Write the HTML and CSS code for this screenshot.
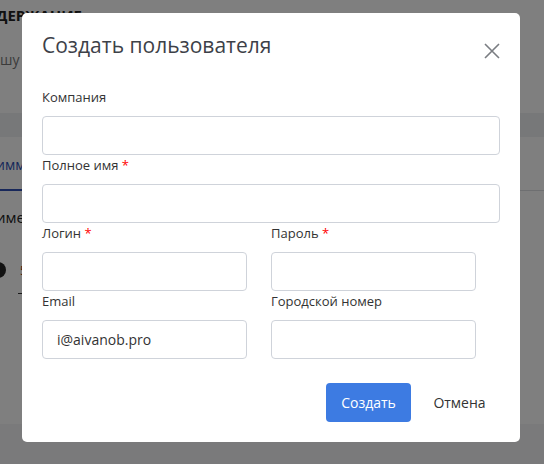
FILE: index.html
```html
<!DOCTYPE html>
<html lang="ru">
<head>
<meta charset="utf-8">
<title>Создать пользователя</title>
<link rel="stylesheet" href="styles.css">
</head>
<body>
<div class="page">
  <div class="bg-title">ДЕРЖАНИЕ</div>
  <div class="bg-sub">шу сохранить изменения</div>
  <div class="bg-band"></div>
  <div class="bg-tabs"><span class="bg-tab">имме</span></div>
  <div class="bg-name">име</div>
  <div class="bg-row"><span class="bg-avatar"></span><span class="bg-small">5</span></div>
  <div class="bg-line"></div>
  <div class="bg-footer"></div>
</div>
<div class="overlay"></div>
<div class="modal" role="dialog">
  <div class="modal-header">
    <h2 class="modal-title">Создать пользователя</h2>
    <button class="close" aria-label="Закрыть">
      <svg width="16" height="16" viewBox="0 0 16 16"><path d="M1 1 L15 15 M15 1 L1 15" stroke="#7a7d82" stroke-width="1.6" fill="none"/></svg>
    </button>
  </div>
  <form class="modal-body">
    <div class="field">
      <label class="label">Компания</label>
      <input class="input" type="text">
    </div>
    <div class="field">
      <label class="label">Полное имя <span class="req">*</span></label>
      <input class="input" type="text">
    </div>
    <div class="grid">
      <div class="field">
        <label class="label">Логин <span class="req">*</span></label>
        <input class="input" type="text">
      </div>
      <div class="field">
        <label class="label">Пароль <span class="req">*</span></label>
        <input class="input" type="password">
      </div>
      <div class="field">
        <label class="label">Email</label>
        <input class="input" type="text" value="i@aivanob.pro">
      </div>
      <div class="field">
        <label class="label">Городской номер</label>
        <input class="input" type="text">
      </div>
    </div>
    <div class="modal-footer">
      <button type="button" class="btn btn-primary">Создать</button>
      <button type="button" class="btn btn-link">Отмена</button>
    </div>
  </form>
</div>
</body>
</html>
```
FILE: styles.css
```css
* { box-sizing: border-box; }
html, body { margin: 0; padding: 0; }
body {
  width: 544px;
  height: 464px;
  overflow: hidden;
  background: #fff;
  font-family: "Open Sans", "Noto Sans", sans-serif;
  color: #333;
}
.page { height: 464px; display: flex; flex-direction: column; overflow: hidden; }
.bg-title { margin-top: 7px; margin-left: -4px; font-size: 15px; font-weight: 700; line-height: 17px; color: #222; white-space: nowrap; }
.bg-sub { margin-top: 26px; font-size: 14px; line-height: 20px; color: #777; white-space: nowrap; }
.bg-band { margin-top: 43px; height: 24px; flex: none; background: #eef0f2; }
.bg-tabs { margin-top: 18px; height: 36px; flex: none; border-bottom: 1px solid #dcdfe3; font-size: 14px; line-height: 20px; }
.bg-tab { display: inline-block; height: 36px; margin-left: -4px; padding-right: 4px; color: #2f4fb5; border-bottom: 2px solid #2f4fb5; }
.bg-name { margin-top: 16px; margin-left: -4px; font-size: 15px; line-height: 20px; color: #222; }
.bg-row { margin-top: 34px; height: 18px; flex: none; display: flex; align-items: center; gap: 14px; }
.bg-avatar { width: 16px; height: 16px; margin-left: -10px; border-radius: 50%; background: #222; }
.bg-small { font-size: 12px; color: #8a3a10; }
.bg-line { margin-top: 14px; margin-left: 18px; width: 10px; height: 1px; flex: none; background: #333; }
.bg-footer { margin-top: auto; height: 40px; flex: none; background: #f4f4f6; }

.overlay { position: fixed; inset: 0; background: rgba(0, 0, 0, 0.5); }

.modal {
  position: fixed;
  top: 13px;
  left: 22px;
  width: 498px;
  background: #fff;
  border-radius: 5px;
  padding: 17px 20px 20px;
}
.modal-header { display: flex; justify-content: space-between; align-items: flex-start; }
.modal-title { margin: 0; font-size: 21px; line-height: 30px; font-weight: 400; color: #3d4148; }
.close { margin: 13px 0 0; padding: 0; border: 0; background: none; width: 16px; height: 16px; display: block; cursor: pointer; }
.close svg { display: block; }
.modal-body { margin: 27px 0 0; }
.field { display: flex; flex-direction: column; }
.label { font-size: 13px; line-height: 20px; margin-bottom: 9px; color: #333; }
.req { color: #f00; }
.input {
  height: 39px;
  border: 1px solid #cfd3da;
  border-radius: 4px;
  padding: 0 14px;
  font: inherit;
  font-size: 14px;
  color: #333;
  background: #fff;
  outline: none;
}
.grid { display: grid; grid-template-columns: 205px 205px; column-gap: 24px; }
.modal-footer { margin-top: 24px; display: flex; justify-content: flex-end; gap: 8px; }
.btn { height: 39px; border: 0; border-radius: 4px; padding: 0; font: inherit; font-size: 14px; text-align: center; cursor: pointer; }
.btn-primary { width: 85px; background: #3d7be2; color: #fff; }
.btn-link { width: 81px; background: none; color: #333; }
```
